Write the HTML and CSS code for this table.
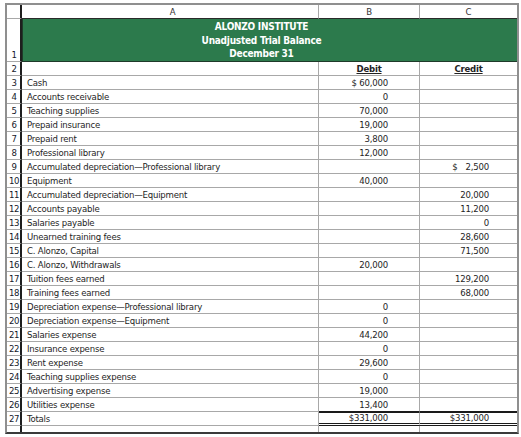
FILE: index.html
```html
<!DOCTYPE html>
<html>
<head>
<meta charset="utf-8">
<link rel="stylesheet" href="styles.css">
</head>
<body>
<div class="sheet">
  <div class="cell n hd"></div>
  <div class="cell a hd col">A</div>
  <div class="cell b hd col">B</div>
  <div class="cell c hd col">C</div>

  <div class="cell n title-n">1</div>
  <div class="cell title">
    <div>ALONZO INSTITUTE</div>
    <div>Unadjusted Trial Balance</div>
    <div>December 31</div>
  </div>

  <div class="cell n">2</div>
  <div class="cell a"></div>
  <div class="cell b colhead"><u>Debit</u></div>
  <div class="cell c colhead"><u>Credit</u></div>

  <div class="cell n">3</div><div class="cell a">Cash</div><div class="cell b num">$ 60,000</div><div class="cell c num"></div>
  <div class="cell n">4</div><div class="cell a">Accounts receivable</div><div class="cell b num">0</div><div class="cell c num"></div>
  <div class="cell n">5</div><div class="cell a">Teaching supplies</div><div class="cell b num">70,000</div><div class="cell c num"></div>
  <div class="cell n">6</div><div class="cell a">Prepaid insurance</div><div class="cell b num">19,000</div><div class="cell c num"></div>
  <div class="cell n">7</div><div class="cell a">Prepaid rent</div><div class="cell b num">3,800</div><div class="cell c num"></div>
  <div class="cell n">8</div><div class="cell a">Professional library</div><div class="cell b num">12,000</div><div class="cell c num"></div>
  <div class="cell n">9</div><div class="cell a">Accumulated depreciation—Professional library</div><div class="cell b num"></div><div class="cell c num"><span class="cur">$</span>2,500</div>
  <div class="cell n">10</div><div class="cell a">Equipment</div><div class="cell b num">40,000</div><div class="cell c num"></div>
  <div class="cell n">11</div><div class="cell a">Accumulated depreciation—Equipment</div><div class="cell b num"></div><div class="cell c num">20,000</div>
  <div class="cell n">12</div><div class="cell a">Accounts payable</div><div class="cell b num"></div><div class="cell c num">11,200</div>
  <div class="cell n">13</div><div class="cell a">Salaries payable</div><div class="cell b num"></div><div class="cell c num">0</div>
  <div class="cell n">14</div><div class="cell a">Unearned training fees</div><div class="cell b num"></div><div class="cell c num">28,600</div>
  <div class="cell n">15</div><div class="cell a">C. Alonzo, Capital</div><div class="cell b num"></div><div class="cell c num">71,500</div>
  <div class="cell n">16</div><div class="cell a">C. Alonzo, Withdrawals</div><div class="cell b num">20,000</div><div class="cell c num"></div>
  <div class="cell n">17</div><div class="cell a">Tuition fees earned</div><div class="cell b num"></div><div class="cell c num">129,200</div>
  <div class="cell n">18</div><div class="cell a">Training fees earned</div><div class="cell b num"></div><div class="cell c num">68,000</div>
  <div class="cell n">19</div><div class="cell a">Depreciation expense—Professional library</div><div class="cell b num">0</div><div class="cell c num"></div>
  <div class="cell n">20</div><div class="cell a">Depreciation expense—Equipment</div><div class="cell b num">0</div><div class="cell c num"></div>
  <div class="cell n">21</div><div class="cell a">Salaries expense</div><div class="cell b num">44,200</div><div class="cell c num"></div>
  <div class="cell n">22</div><div class="cell a">Insurance expense</div><div class="cell b num">0</div><div class="cell c num"></div>
  <div class="cell n">23</div><div class="cell a">Rent expense</div><div class="cell b num">29,600</div><div class="cell c num"></div>
  <div class="cell n">24</div><div class="cell a">Teaching supplies expense</div><div class="cell b num">0</div><div class="cell c num"></div>
  <div class="cell n">25</div><div class="cell a">Advertising expense</div><div class="cell b num">19,000</div><div class="cell c num"></div>
  <div class="cell n">26</div><div class="cell a">Utilities expense</div><div class="cell b num pre-total">13,400</div><div class="cell c num pre-total"></div>
  <div class="cell n">27</div><div class="cell a">Totals</div><div class="cell b num total">$331,000</div><div class="cell c num total">$331,000</div>

  <div class="cell n end"></div><div class="cell a end"></div><div class="cell b end"></div><div class="cell c end"></div>
</div>
</body>
</html>
```

FILE: styles.css
```css
html, body {
  margin: 0;
  padding: 0;
  background: #ffffff;
}

body {
  font-family: "DejaVu Sans Condensed", "Roboto", sans-serif;
  font-size: 9.5px;
  letter-spacing: -0.2px;
  color: #1e1e1e;
}

.sheet {
  margin: 3px 0 0 5px;
  width: 514px;
  box-sizing: border-box;
  border: 2px solid #8f8f8f;
  border-bottom-color: #3a3a3a;
  display: grid;
  grid-template-columns: 15px 297px 101px 97px;
  grid-template-rows: 14px 43px repeat(26, 14px) 6px;
}

.cell {
  box-sizing: border-box;
  border-bottom: 1px solid #a8a8a8;
  border-right: 1px solid #a8a8a8;
  line-height: 14px;
  white-space: nowrap;
  overflow: hidden;
}

.c {
  border-right: none;
}

.n {
  border-right: 2px solid #1e1e1e;
  text-align: center;
  color: #15192a;
  padding-left: 1px;
  letter-spacing: -0.4px;
}

.a {
  padding-left: 5px;
}

.col {
  text-align: center;
  color: #333;
  line-height: 13px;
}

.hd.a, .hd.b, .hd.c {
  border-bottom-color: #2a2a2a;
}

.title-n {
  display: flex;
  align-items: flex-end;
  justify-content: center;
  line-height: 12px;
}

.title {
  grid-column: 2 / 5;
  background: #2c7a4c;
  color: #ffffff;
  font-weight: bold;
  font-size: 10px;
  letter-spacing: -0.25px;
  text-align: center;
  border: 1px solid #1f3a2a;
  border-top: none;
  border-right: none;
  padding: 1px 17px 0 0;
  line-height: 13.5px;
}

.colhead {
  text-align: center;
  font-weight: bold;
  color: #222;
}

.colhead u {
  text-underline-offset: 1px;
}

.num {
  text-align: right;
}

.b.num {
  padding-right: 31px;
}

.c.num {
  padding-right: 28px;
}

.cur {
  margin-right: 8px;
}

.pre-total {
  border-bottom-color: #1a1a1a;
}

.total {
  border-top: 1px solid #1a1a1a;
  border-bottom: 3px double #1a1a1a;
  line-height: 10px;
  overflow: visible;
}

.end {
  border-bottom: none;
}
```
